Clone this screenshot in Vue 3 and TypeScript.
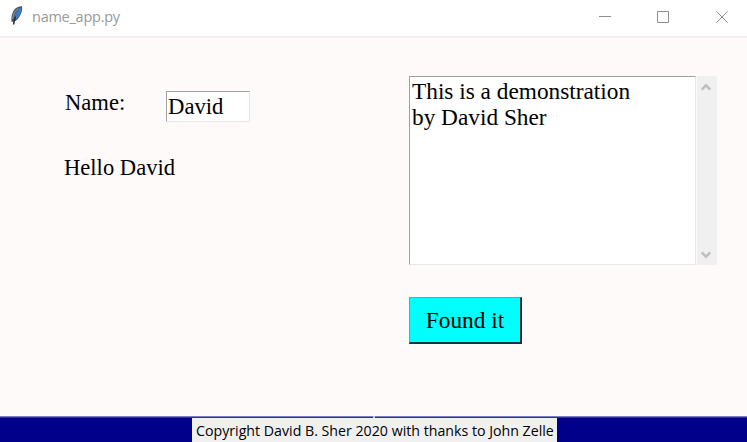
<script setup lang="ts">
import { ref } from 'vue'

const title = 'name_app.py'
const name = ref('David')
const notes = ref('This is a demonstration\nby David Sher')
const copyright = 'Copyright David B. Sher 2020 with thanks to John Zelle'
</script>

<template>
  <div class="window">
    <header class="titlebar">
      <svg class="feather" width="14" height="21" viewBox="0 0 14 21">
        <path d="M1.700 17C.7 12 2.200 6.500 5.700 3.200C8 1.400 10.700 .8 12 1.300C12.700 4.800 11.400 9 8.900 12.400C7 14.800 5 16.300 3.800 16.600Z" fill="#4c545e" />
        <path d="M4.200 14C4.200 9.500 6.500 4.800 11 2.400C11.500 6 9.900 10 7.300 12.900C6 14.200 5 14.600 4.200 14Z" fill="#3f7fd0" />
        <path d="M2.700 14C3 9.500 5 5.500 8.500 3.200" fill="none" stroke="#8fa0b4" stroke-width="1" />
        <path d="M3.600 19.500C4 16.500 4.500 14 5.500 11.500" fill="none" stroke="#23282e" stroke-width="1.500" />
        <path d="M5.500 11.500C6.500 9 7.600 7 9 5" fill="none" stroke="#2e5f9f" stroke-width=".7" />
      </svg>
      <span class="title">{{ title }}</span>
      <div class="controls">
        <svg width="12" height="12" viewBox="0 0 12 12"><path d="M1 5.500H13" /></svg>
        <svg width="12" height="12" viewBox="0 0 12 12"><path d="M.5 .5H11.500V11.500H.5Z" /></svg>
        <svg width="12" height="12" viewBox="0 0 12 12"><path d="M.3 .3L11.700 11.700M11.700 .3L.3 11.700" /></svg>
      </div>
    </header>
    <main class="content">
      <section class="left">
        <div class="row">
          <label class="label" for="name">Name:</label>
          <input id="name" v-model="name" class="entry" type="text" />
        </div>
        <div class="greeting">Hello {{ name }}</div>
      </section>
      <section class="right">
        <div class="textbox">
          <textarea v-model="notes" class="notes" spellcheck="false"></textarea>
          <div class="scrollbar">
            <svg width="10" height="8" viewBox="0 0 10 8"><path d="M.8 6.500L5 2.300L9.200 6.500" /></svg>
            <svg width="10" height="8" viewBox="0 0 10 8"><path d="M.8 1.500L5 5.700L9.200 1.500" /></svg>
          </div>
        </div>
        <button class="found" type="button">Found it</button>
      </section>
    </main>
    <footer class="footer">
      <div class="edge"><i class="notch"></i></div>
      <div class="copyright">{{ copyright }}</div>
    </footer>
  </div>
</template>

<style>
body {
  margin: 0;
  overflow: hidden;
}
</style>

<style scoped>
.window {
  display: flex;
  flex-direction: column;
  width: 747px;
  height: 442px;
  background: #fffafa;
  color: #000;
  font-family: 'Liberation Serif', serif;
  font-size: 23.3px;
  line-height: 26px;
  overflow: hidden;
}
.titlebar {
  box-sizing: border-box;
  display: flex;
  align-items: flex-start;
  height: 38px;
  padding: 5px 19px 0 10px;
  background: #fff;
  border-bottom: 2px solid #f0f0f0;
}
.feather {
  display: block;
  width: 14px;
  height: 21px;
}
.title {
  margin: 1px 0 0 8px;
  color: #999;
  font-family: 'Open Sans', sans-serif;
  font-size: 14.500px;
  letter-spacing: -0.25px;
  line-height: 22px;
  white-space: nowrap;
}
.controls {
  display: flex;
  gap: 47px;
  margin: 6px 0 0 auto;
}
.controls svg {
  display: block;
  overflow: visible;
  fill: none;
  stroke: #8f8f8f;
  stroke-width: 1;
}
.content {
  display: flex;
  flex: 1;
  padding: 38px 30px 0 64px;
}
.left {
  width: 345px;
}
.row {
  display: flex;
  align-items: flex-start;
  padding-top: 15px;
}
.label {
  width: 100px;
  margin-top: -1px;
  padding-left: 1px;
  font-size: 22.600px;
}
.entry {
  box-sizing: border-box;
  width: 84px;
  height: 31px;
  margin: 0 0 0 1px;
  padding: 1px 0 0 1px;
  border: 1px solid;
  border-color: #a0a0a0 #e8e8e8 #e8e8e8 #a0a0a0;
  border-radius: 0;
  outline: none;
  background: #fff;
  color: #000;
  font: inherit;
  font-size: 22.700px;
}
.greeting {
  margin-top: 33px;
  font-size: 22.600px;
}
.right {
  display: flex;
  flex-direction: column;
  align-items: flex-start;
}
.textbox {
  display: flex;
  gap: 1px;
  height: 189px;
}
.notes {
  box-sizing: border-box;
  display: block;
  width: 287px;
  height: 189px;
  margin: 0;
  padding: 1px 0 0 2px;
  border: 1px solid;
  border-color: #a0a0a0 #e8e8e8 #e8e8e8 #a0a0a0;
  border-radius: 0;
  outline: none;
  resize: none;
  overflow: hidden;
  background: #fff;
  color: #000;
  font: inherit;
}
.scrollbar {
  box-sizing: border-box;
  display: flex;
  flex-direction: column;
  align-items: center;
  justify-content: space-between;
  width: 20px;
  padding: 7px 2px 6px 0;
  background: #f0f0f0;
}
.scrollbar svg {
  display: block;
  fill: none;
  stroke: #bfbfbf;
  stroke-width: 2.500;
}
.found {
  box-sizing: border-box;
  width: 113px;
  height: 47px;
  margin-top: 32px;
  padding: 0;
  border: 1px solid #00d0d0;
  border-right: 2px solid #003c3c;
  border-bottom: 2px solid #003c3c;
  border-radius: 0;
  background: #0ff;
  color: #000;
  font: inherit;
}
.footer {
  display: flex;
  flex-direction: column;
  align-items: center;
  height: 26px;
  background: #00008b;
}
.edge {
  display: flex;
  justify-content: center;
  width: 100%;
  height: 2px;
  background: linear-gradient(#7d7dc4 50%, #3030a0 50%);
}
.notch {
  width: 2px;
  height: 2px;
  background: #c8c8e6;
}
.copyright {
  box-sizing: border-box;
  width: 365px;
  height: 24px;
  margin-left: 2px;
  padding-left: 4px;
  background: #f0f0f0;
  font-family: 'Open Sans', sans-serif;
  font-size: 14.200px;
  line-height: 26px;
  white-space: nowrap;
}
</style>
